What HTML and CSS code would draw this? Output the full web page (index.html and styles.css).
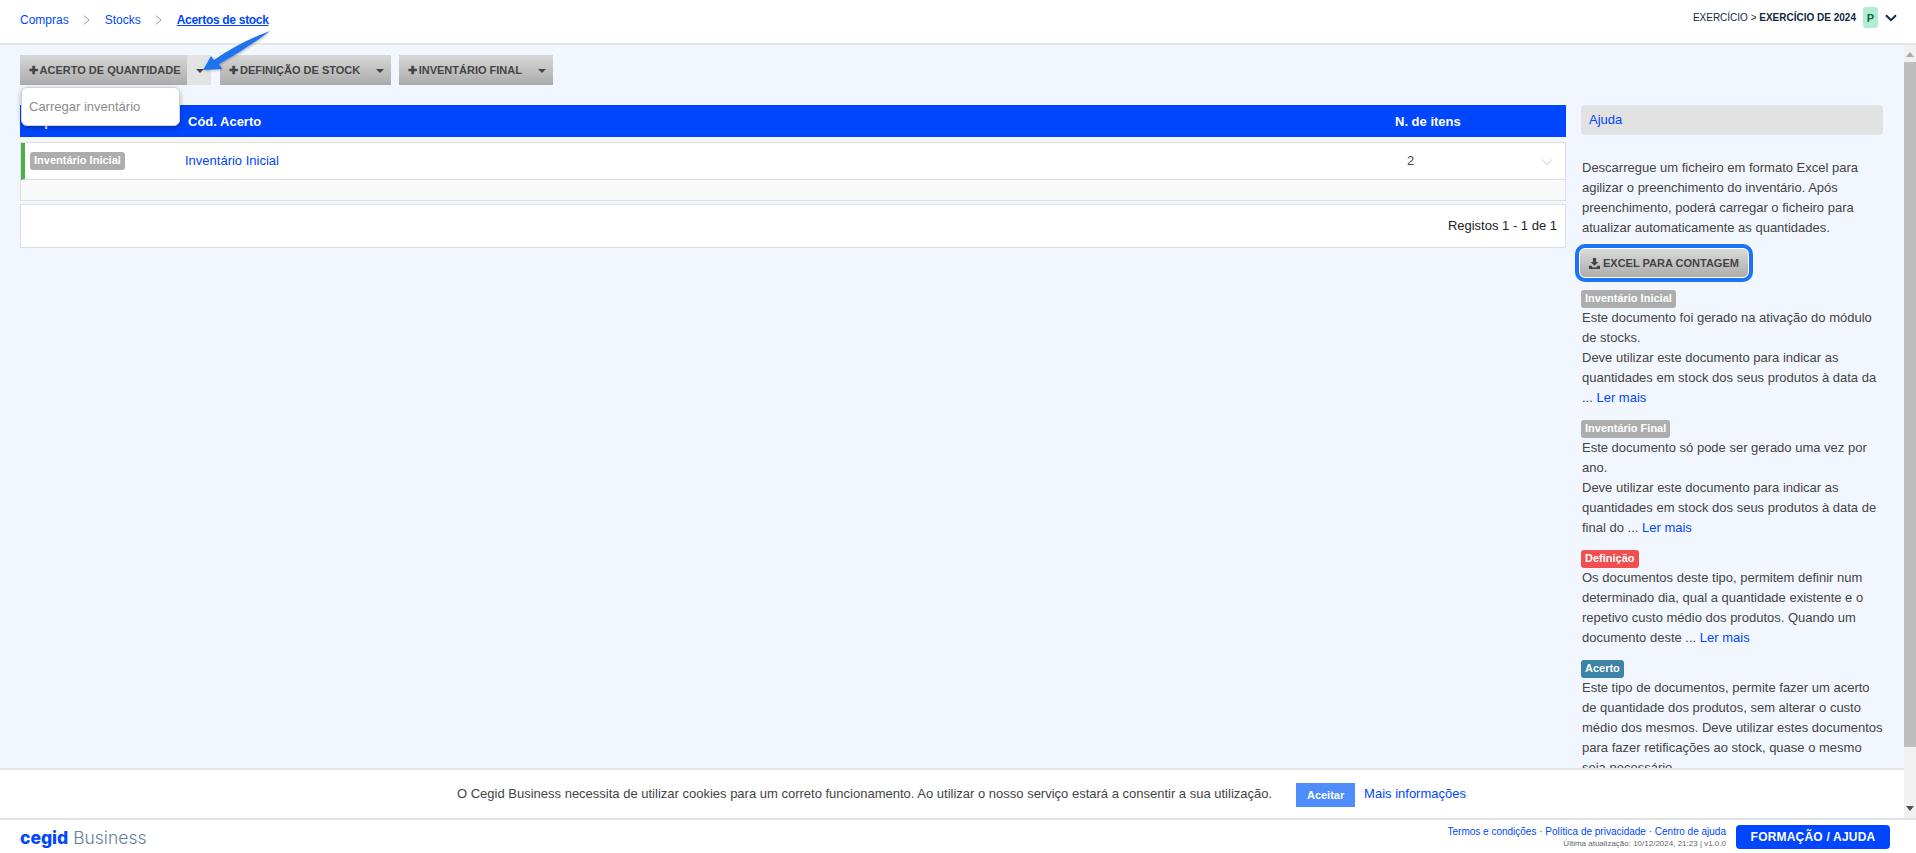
FILE: index.html
```html
<!DOCTYPE html>
<html lang="pt">
<head>
<meta charset="utf-8">
<title>Acertos de stock</title>
<link rel="stylesheet" href="styles.css">
</head>
<body>
<div class="app">
  <header class="topbar">
    <nav class="crumbs">
      <a>Compras</a>
      <svg class="sep" viewBox="0 0 7 10"><path d="M1 .5l5 4.500-5 4.500" fill="none" stroke="#9a9a9a" stroke-width="1"/></svg>
      <a>Stocks</a>
      <svg class="sep" viewBox="0 0 7 10"><path d="M1 .5l5 4.500-5 4.500" fill="none" stroke="#9a9a9a" stroke-width="1"/></svg>
      <a class="current">Acertos de stock</a>
    </nav>
    <div class="year">
      <span>EXERCÍCIO &gt; <b>EXERCÍCIO DE 2024</b></span>
      <span class="avatar">P</span>
      <svg class="chev" viewBox="0 0 12 8"><path d="M1 1.200L6 6.200l5-5" fill="none" stroke="#12283f" stroke-width="2"/></svg>
    </div>
  </header>
  <div class="middle">
    <div class="left">
      <main class="content">
        <section class="list">
          <div class="actions">
            <div class="split open">
              <button class="btn"><span class="plus">✚</span>ACERTO DE QUANTIDADE</button>
              <button class="caret-btn"><i class="caret"></i></button>
              <div class="menu">Carregar inventário</div>
            </div>
            <div class="split">
              <button class="btn"><span class="plus">✚</span>DEFINIÇÃO DE STOCK</button>
              <button class="caret-btn"><i class="caret"></i></button>
            </div>
            <div class="split">
              <button class="btn"><span class="plus">✚</span>INVENTÁRIO FINAL</button>
              <button class="caret-btn"><i class="caret"></i></button>
            </div>
          </div>
          <div class="thead">
            <div class="c-type">Tipo</div>
            <div class="c-code">Cód. Acerto</div>
            <div class="c-num">N. de itens</div>
          </div>
          <div class="card">
            <div class="row">
              <div class="c-type"><span class="badge grey">Inventário Inicial</span></div>
              <div class="c-code"><a>Inventário Inicial</a></div>
              <div class="c-num">2</div>
              <svg class="row-chev" viewBox="0 0 12 8"><path d="M1 1.500l5 5 5-5" fill="none" stroke="#e2e2e2" stroke-width="1.500"/></svg>
            </div>
            <div class="row-foot"></div>
          </div>
          <div class="pager">Registos 1 - 1 de 1</div>
        </section>
        <aside class="help">
          <div class="help-title">Ajuda</div>
          <p class="intro">Descarregue um ficheiro em formato Excel para agilizar o preenchimento do inventário. Após preenchimento, poderá carregar o ficheiro para atualizar automaticamente as quantidades.</p>
          <div class="excel-ring">
            <button class="excel"><svg class="dl" viewBox="0 0 14 14"><path d="M5 0h4v5h3L7 10 2 5h3zM0 10h3l2 2h4l2-2h3v4H0z" fill="#444"/></svg>EXCEL PARA CONTAGEM</button>
          </div>
          <div class="note">
            <span class="badge grey">Inventário Inicial</span>
            <p>Este documento foi gerado na ativação do módulo de stocks.<br>Deve utilizar este documento para indicar as quantidades em stock dos seus produtos à data da ... <a>Ler mais</a></p>
          </div>
          <div class="note">
            <span class="badge grey">Inventário Final</span>
            <p>Este documento só pode ser gerado uma vez por ano.<br>Deve utilizar este documento para indicar as quantidades em stock dos seus produtos à data de final do ... <a>Ler mais</a></p>
          </div>
          <div class="note">
            <span class="badge red">Definição</span>
            <p>Os documentos deste tipo, permitem definir num determinado dia, qual a quantidade existente e o repetivo custo médio dos produtos. Quando um documento deste ... <a>Ler mais</a></p>
          </div>
          <div class="note">
            <span class="badge teal">Acerto</span>
            <p>Este tipo de documentos, permite fazer um acerto de quantidade dos produtos, sem alterar o custo médio dos mesmos. Deve utilizar estes documentos para fazer retificações ao stock, quase o mesmo seja necessário.</p>
          </div>
        </aside>
      </main>
      <div class="cookie">
        <span>O Cegid Business necessita de utilizar cookies para um correto funcionamento. Ao utilizar o nosso serviço estará a consentir a sua utilização.</span>
        <button class="accept">Aceitar</button>
        <a>Mais informações</a>
      </div>
    </div>
    <div class="scrollbar">
      <i class="sb-up"></i>
      <div class="sb-thumb"></div>
      <div class="sb-track"></div>
      <i class="sb-down"></i>
    </div>
  </div>
  <footer class="footer">
    <div class="logo"><b>cegid</b> <span>Business</span></div>
    <div class="foot-right">
      <div class="foot-links">
        <div><a>Termos e condições</a> · <a>Política de privacidade</a> · <a>Centro de ajuda</a></div>
        <small>Última atualização: 10/12/2024, 21:23 | v1.0.0</small>
      </div>
      <button class="training">FORMAÇÃO / AJUDA</button>
    </div>
  </footer>
  <svg class="arrow" viewBox="200 28 72 46" width="72" height="46">
    <path d="M203 70L211 56L214 60Q240 42 270 31Q245 50 219 64L222 69Z" fill="#1e73ee"/>
  </svg>
</div>
</body>
</html>
```
FILE: styles.css
```css
* { box-sizing: border-box; }
html, body { margin: 0; height: 100%; overflow: hidden; }
body { font-family: "Liberation Sans", Arial, sans-serif; font-size: 13px; color: #444; background: #fff; }
a { color: #0046fe; }
button { font-family: inherit; border: 0; padding: 0; }

.app { position: relative; height: 853px; display: flex; flex-direction: column; }

.topbar { height: 45px; flex: none; display: flex; align-items: flex-start; justify-content: space-between; padding: 0 19px 0 20px; border-bottom: 2px solid #e4e6ea; background: #fff; }
.crumbs { display: flex; align-items: center; font-size: 12px; height: 40px; }
.sep { width: 7px; height: 10px; margin: 0 14.500px; }
.current { font-weight: bold; text-decoration: underline; letter-spacing: -.3px; }
.year { display: flex; align-items: center; font-size: 10px; color: #12283f; height: 21px; margin-top: 7px; }
.avatar { width: 15px; height: 21px; margin-left: 7px; background: #b2ecd2; border-radius: 3px; display: flex; align-items: center; justify-content: center; font-weight: bold; font-size: 11px; color: #0b6b45; }
.chev { width: 12px; height: 8px; margin-left: 7px; }

.middle { flex: 1; min-height: 0; display: flex; }
.left { flex: 1; min-width: 0; display: flex; flex-direction: column; }
.content { flex: 1; min-height: 0; overflow: hidden; background: #f2f6fe; display: flex; align-items: flex-start; padding: 10px 21px 0 20px; }

.list { width: 1546px; flex: none; }
.actions { display: flex; gap: 8px; height: 30px; margin-bottom: 20px; }
.split { position: relative; display: flex; height: 30px; background: linear-gradient(#d8d8d8, #ababab); }
.open { margin-right: 1.500px; }
.btn { background: none; height: 30px; padding-left: 7px; font-size: 11px; font-weight: bold; color: #444; display: flex; align-items: center; }
.plus { font-size: 11px; width: 12.500px; }
.caret-btn { width: 31px; padding-left: 16px; background: none; display: flex; align-items: center; }
.open .caret-btn { width: 23.500px; padding-left: 9px; background: #e3e3e3; margin-left: 7px; }
.caret { width: 0; height: 0; border: 4px solid transparent; border-top: 4px solid #444; border-bottom: 0; margin-top: 2px; }
.menu { position: absolute; top: 32px; left: 1px; width: 159px; height: 39px; z-index: 3; background: #fff; border: 1px solid #d4d4d4; border-radius: 6px; box-shadow: 0 2px 5px rgba(0,0,0,.3); padding: 11px 7px; font-size: 13px; color: #8b8b8b; line-height: 16px; }

.thead { height: 32px; background: #0046fe; color: #fff; font-weight: bold; display: flex; align-items: center; }
.c-type { flex: none; }
.c-code { flex: 1; }
.c-num { flex: none; }
.thead .c-type { width: 168px; padding-left: 13px; }
.thead .c-num { width: 171px; }

.card { margin-top: 5px; border: 1px solid #dedede; background: #f9f9f9; }
.row { position: relative; height: 37px; background: #fff; border-left: 4px solid #4caf50; border-bottom: 1px solid #dedede; display: flex; align-items: center; }
.row .c-type { width: 160px; padding-left: 5px; display: flex; }
.row .c-code, .row .c-num { padding-bottom: 2px; }
.row .c-num { width: 158px; }
.row-chev { position: absolute; right: 12px; top: 15px; width: 12px; height: 8px; }
.row-foot { height: 20px; }
.pager { margin-top: 3px; height: 44px; border: 1px solid #dedede; background: #fff; display: flex; align-items: center; justify-content: flex-end; padding: 0 8px 2px 0; color: #222; }

.badge { display: block; width: max-content; height: 18px; font-size: 11px; font-weight: bold; color: #fff; line-height: 17px; padding: 0 4px; border-radius: 3px; }
.grey { background: #adadad; }
.red { background: #f05050; }
.teal { background: #3d83a8; }

.help { width: 302px; margin-left: 15px; margin-top: 50px; flex: none; line-height: 20px; }
.help-title { height: 30px; background: #e2e2e2; border-radius: 4px; padding: 0 8px; line-height: 29px; color: #0046fe; }
.help p { margin: 0; padding-left: 1px; }
.help .intro { margin-top: 23px; }
.excel-ring { width: 178px; margin: 6px 0 0 -6px; border: 4px solid #1b73f5; border-radius: 10px; background: #fff; padding: 1px; }
.excel { display: flex; align-items: center; height: 28px; width: 168px; padding-left: 9px; border-radius: 5px; background: linear-gradient(#dadada, #adadad); font-size: 11px; font-weight: bold; color: #444; }
.dl { width: 11px; height: 11px; margin-right: 3px; }
.note { margin-top: 12px; }
.excel-ring + .note { margin-top: 8px; }

.cookie { height: 50px; flex: none; background: #fff; border-top: 2px solid #e4e6ea; display: flex; align-items: center; padding: 0 0 2px 457px; font-size: 13px; color: #444; }
.accept { width: 59px; height: 24px; margin: 4px 9px 0 24px; background: #4d8dfc; color: #fff; font-weight: bold; font-size: 11px; }

.scrollbar { width: 12px; flex: none; background: #f1f1f1; display: flex; flex-direction: column; align-items: center; }
.sb-up, .sb-down { flex: none; width: 0; height: 0; border: 4px solid transparent; }
.sb-up { border-bottom: 5px solid #a8a8a8; border-top: 0; margin: 7px 0 5px; }
.sb-down { border-top: 5px solid #505050; border-bottom: 0; margin: 5px 0 7px; }
.sb-thumb { width: 100%; height: 685px; flex: none; background: #bebebe; }
.sb-track { flex: 1; }

.footer { height: 35px; flex: none; border-top: 2px solid #e0e2e6; background: #fff; display: flex; align-items: center; justify-content: space-between; padding: 0 26px 0 20px; }
.logo { font-family: Inter, "Open Sans", sans-serif; font-size: 17.500px; color: #64809b; font-weight: 300; padding-top: 2px; }
.logo b { color: #0046fe; font-weight: 800; }
.foot-right { display: flex; align-items: center; }
.foot-links { text-align: right; font-size: 10px; line-height: 13px; }
.foot-links small { display: block; font-size: 8px; line-height: 11px; color: #666; }
.training { width: 154px; height: 24px; margin-left: 10px; border-radius: 4px; background: #0046fe; color: #fff; font-weight: bold; font-size: 12px; letter-spacing: .2px; }

.arrow { position: absolute; left: 200px; top: 28px; z-index: 5; filter: drop-shadow(1px 1px 1px rgba(0,0,0,.25)); }
```
